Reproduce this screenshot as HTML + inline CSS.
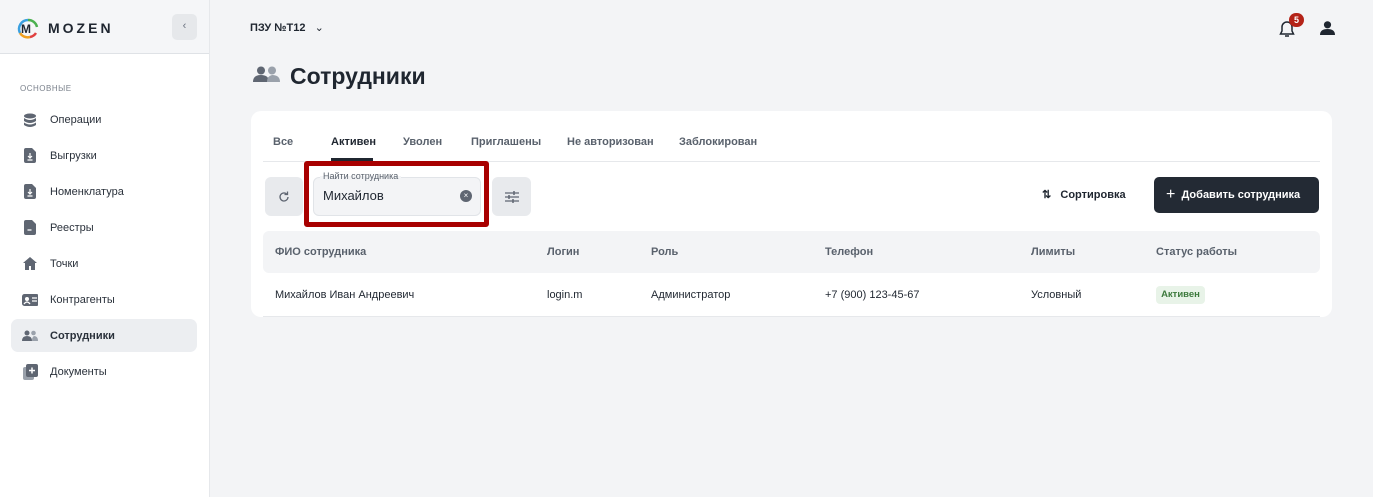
<!DOCTYPE html>
<html><head><meta charset="utf-8"><style>
*{box-sizing:border-box;margin:0;padding:0}
body{width:1373px;height:497px;overflow:hidden;background:#f3f4f6;font-family:"Liberation Sans",sans-serif;color:#1f2630;position:relative;font-size:12px}
.sb{position:absolute;left:0;top:0;width:210px;height:497px;background:#fff;border-right:1px solid #e6e8eb}
.sbh{height:54px;background:#f5f6f8;border-bottom:1px solid #dfe2e6;position:relative}
.logo{position:absolute;left:16px;top:17px;font-weight:bold;font-size:14px;letter-spacing:3px;display:flex;align-items:center}
.col{position:absolute;left:172px;top:14px;width:25px;height:26px;background:#e6e8eb;border-radius:5px;color:#6b7280;text-align:center;line-height:25px;font-size:11px}
.sec{position:absolute;left:20px;top:84px;font-size:8px;color:#7b828c;letter-spacing:.5px}
.it{position:absolute;left:11px;width:186px;height:33px;border-radius:7px;display:flex;align-items:center;font-size:11px;color:#2a313b}
.it .ic{width:16px;height:16px;margin:0 12px 0 11px;display:flex;align-items:center;justify-content:center}
.it.act{background:#eceef1}
.abs{position:absolute}
.card{position:absolute;left:251px;top:111px;width:1081px;height:206px;background:#fff;border-radius:10px}
.tab{position:absolute;top:136px;font-size:11px;color:#59616c;font-weight:bold}
.th{position:absolute;top:246px;font-size:11px;color:#59616c;font-weight:bold}
.td{position:absolute;top:289px;font-size:11px;color:#1f2630}
</style></head><body>
<div class="sb">
 <div class="sbh">
  <div class="logo"><svg width="24" height="22" viewBox="0 0 24 22"><path d="M4 16 A9 9 0 0 1 12 3" stroke="#3aa0e0" stroke-width="2.5" fill="none"/><path d="M12 3 A9 9 0 0 1 21 10" stroke="#4cb050" stroke-width="2.5" fill="none"/><path d="M4 16 A9 9 0 0 0 14 20" stroke="#f0a020" stroke-width="2.5" fill="none"/><path d="M14 20 A9 9 0 0 0 20 16" stroke="#e04040" stroke-width="2.5" fill="none"/><text x="5" y="16" font-size="12" font-weight="bold" font-family="Liberation Sans" fill="#1f2630">M</text></svg><span style="margin-left:8px">MOZEN</span></div>
  <div class="col">‹</div>
 </div>
 <div class="sec">ОСНОВНЫЕ</div>
 <div class="it" style="top:103px"><div class="ic"><svg width="14" height="14"><ellipse cx="7" cy="3" rx="6" ry="2.5" fill="#5f6672"/><path d="M1 5q6 4 12 0v3q-6 4-12 0z M1 9.5q6 4 12 0v2.5q-6 4-12 0z" fill="#5f6672"/></svg></div>Операции</div>
 <div class="it" style="top:139px"><div class="ic"><svg width="12" height="15"><path d="M0 2a2 2 0 0 1 2-2h6l4 4v9a2 2 0 0 1-2 2H2a2 2 0 0 1-2-2z" fill="#5f6672"/><path d="M6 5v5M4 8l2 2 2-2M3.5 12h5" stroke="#fff" stroke-width="1.2" fill="none"/></svg></div>Выгрузки</div>
 <div class="it" style="top:175px"><div class="ic"><svg width="12" height="15"><path d="M0 2a2 2 0 0 1 2-2h6l4 4v9a2 2 0 0 1-2 2H2a2 2 0 0 1-2-2z" fill="#5f6672"/><path d="M6 5v5M4 8l2 2 2-2M3.5 12h5" stroke="#fff" stroke-width="1.2" fill="none"/></svg></div>Номенклатура</div>
 <div class="it" style="top:211px"><div class="ic"><svg width="12" height="15"><path d="M0 2a2 2 0 0 1 2-2h6l4 4v9a2 2 0 0 1-2 2H2a2 2 0 0 1-2-2z" fill="#5f6672"/><path d="M3.5 10h4" stroke="#fff" stroke-width="1.3"/></svg></div>Реестры</div>
 <div class="it" style="top:247px"><div class="ic"><svg width="14" height="13"><path d="M7 0L0 6h2v7h4V9h2v4h4V6h2z" fill="#5f6672"/></svg></div>Точки</div>
 <div class="it" style="top:283px"><div class="ic"><svg width="17" height="12"><rect width="17" height="12" rx="2.5" fill="#5f6672"/><circle cx="5" cy="5" r="2" fill="#fff"/><path d="M2 10q3-4 6 0M10 4h5M10 7h5" stroke="#fff" stroke-width="1.3" fill="none"/></svg></div>Контрагенты</div>
 <div class="it act" style="top:319px;font-weight:bold"><div class="ic"><svg width="16" height="11"><circle cx="5" cy="3" r="2.5" fill="#5f6672"/><circle cx="11.5" cy="3" r="2.3" fill="#9aa1ab"/><path d="M0 11q0-5 5-5t5 5z" fill="#5f6672"/><path d="M10 11q0-4 2-5 4 0 4 5z" fill="#9aa1ab"/></svg></div>Сотрудники</div>
 <div class="it" style="top:355px"><div class="ic"><svg width="15" height="16"><rect x="0" y="3" width="11" height="13" rx="2" fill="#9aa1ab"/><rect x="3" y="0" width="12" height="13" rx="2" fill="#5f6672"/><path d="M9 3.5v6M6 6.5h6" stroke="#fff" stroke-width="1.5"/></svg></div>Документы</div>
</div>

<div class="abs" style="left:250px;top:21px;font-size:11px;font-weight:bold">ПЗУ №Т12 <span style="margin-left:6px;font-weight:normal">⌄</span></div>
<svg class="abs" style="left:253px;top:66px" width="27" height="16"><circle cx="8" cy="4.5" r="4" fill="#5f6672"/><circle cx="19" cy="4.5" r="4" fill="#9aa1ab"/><path d="M0 16q0-7 8-7t8 7z" fill="#5f6672"/><path d="M14 16q0-6 5-7 8 0 8 7z" fill="#9aa1ab"/></svg>
<div class="abs" style="left:290px;top:63px;font-size:23px;font-weight:bold;color:#1f2630">Сотрудники</div>

<svg class="abs" style="left:1279px;top:20px" width="16" height="18"><path d="M8 2a5 5 0 0 0-5 5v4l-1.5 3h13L13 11V7a5 5 0 0 0-5-5z" stroke="#1f2630" stroke-width="1.5" fill="none"/><path d="M6 16h4" stroke="#1f2630" stroke-width="1.5"/></svg>
<div class="abs" style="left:1289px;top:13px;width:15px;height:14px;border-radius:7px;background:#b42318;color:#fff;font-size:9px;font-weight:bold;text-align:center;line-height:14px">5</div>
<svg class="abs" style="left:1320px;top:21px" width="15" height="14"><circle cx="7.5" cy="3.8" r="3.6" fill="#1f2630"/><path d="M0 14q0-6 7.5-6t7.5 6z" fill="#1f2630"/></svg>

<div class="card"></div>
<div class="tab" style="left:273px">Все</div>
<div class="tab" style="left:331px;color:#1f2630">Активен</div>
<div class="tab" style="left:403px">Уволен</div>
<div class="tab" style="left:471px">Приглашены</div>
<div class="tab" style="left:567px">Не авторизован</div>
<div class="tab" style="left:679px">Заблокирован</div>
<div class="abs" style="left:263px;top:161px;width:1057px;height:1px;background:#e6e8eb"></div>
<div class="abs" style="left:331px;top:158px;width:42px;height:3px;background:#1f2630"></div>

<div class="abs" style="left:265px;top:177px;width:38px;height:39px;border-radius:6px;background:#e8eaed;display:flex;align-items:center;justify-content:center"><svg width="12" height="12"><path d="M10 6a4 4 0 1 1-1.2-2.9" stroke="#5f6672" stroke-width="1.3" fill="none"/><path d="M9.5 0.5v3h-3" stroke="#5f6672" stroke-width="1.3" fill="none"/></svg></div>
<div class="abs" style="left:313px;top:177px;width:168px;height:39px;border-radius:6px;background:#f3f4f6;border:1px solid #e1e4e8"></div>
<div class="abs" style="left:320px;top:171px;padding:0 3px;font-size:9px;color:#59616c;background:linear-gradient(#fff 50%,#f3f4f6 50%)">Найти сотрудника</div>
<div class="abs" style="left:323px;top:188px;font-size:13px">Михайлов</div>
<div class="abs" style="left:460px;top:190px;width:12px;height:12px;border-radius:6px;background:#5f6672;color:#fff;font-size:8px;text-align:center;line-height:12px">×</div>
<div class="abs" style="left:304px;top:161px;width:185px;height:66px;border:5px solid #a80000;border-radius:3px"></div>
<div class="abs" style="left:492px;top:177px;width:39px;height:39px;border-radius:6px;background:#e8eaed;display:flex;align-items:center;justify-content:center"><svg width="14" height="12"><path d="M0 2h14M0 6h14M0 10h14" stroke="#5f6672" stroke-width="1.2"/><path d="M9 0v4M4 4v4M8 8v4" stroke="#5f6672" stroke-width="1.5"/></svg></div>

<div class="abs" style="left:1042px;top:188px;font-size:11px;font-weight:bold">⇅&nbsp;&nbsp; Сортировка</div>
<div class="abs" style="left:1154px;top:177px;width:165px;height:36px;border-radius:5px;background:#232a34;color:#fff;font-size:11px;font-weight:bold;line-height:36px;padding-left:12px"><span style="font-size:16px;font-weight:normal;vertical-align:-1px">+</span>&nbsp; Добавить сотрудника</div>

<div class="abs" style="left:263px;top:231px;width:1057px;height:42px;border-radius:6px;background:#f3f4f6"></div>
<div class="th" style="left:275px">ФИО сотрудника</div>
<div class="th" style="left:547px">Логин</div>
<div class="th" style="left:651px">Роль</div>
<div class="th" style="left:825px">Телефон</div>
<div class="th" style="left:1031px">Лимиты</div>
<div class="th" style="left:1156px">Статус работы</div>
<div class="td" style="left:275px">Михайлов Иван Андреевич</div>
<div class="td" style="left:547px">login.m</div>
<div class="td" style="left:651px">Администратор</div>
<div class="td" style="left:825px">+7 (900) 123-45-67</div>
<div class="td" style="left:1031px">Условный</div>
<div class="abs" style="left:1156px;top:286px;width:49px;height:18px;border-radius:4px;background:#e8f3e8;color:#3d7a3d;font-size:9.5px;font-weight:bold;text-align:center;line-height:18px">Активен</div>
<div class="abs" style="left:263px;top:316px;width:1057px;height:1px;background:#e6e8eb"></div>
</body></html>
